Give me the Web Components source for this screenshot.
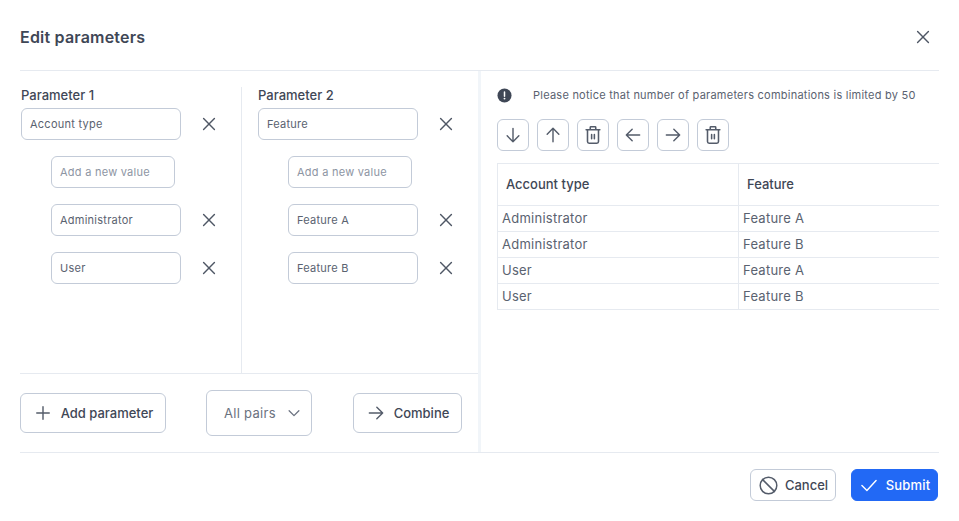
<!DOCTYPE html>
<html lang="en">
<head>
<meta charset="utf-8">
<title>Edit parameters</title>
<style>
  html, body { margin: 0; background: #fff; }
  body { font-family: Inter, "Noto Sans", sans-serif; color: #3f4756; }
</style>
</head>
<body>
<edit-dialog></edit-dialog>
<script>
// shared icons, all on a 24 box
const ICONS = {
  close: `<path d="M5.5 5.5l13 13M18.5 5.5l-13 13"/>`,
  plus: `<path d="M12 4.5v15M4.5 12h15"/>`,
  down: `<path d="M12 4v16M5 13l7 7 7-7"/>`,
  up: `<path d="M12 20V4M5 11l7-7 7 7"/>`,
  left: `<path d="M20 12H4M11 5l-7 7 7 7"/>`,
  right: `<path d="M4 12h16M13 5l7 7-7 7"/>`,
  chevron: `<path d="M5.5 9l6.5 6.5L18.5 9"/>`,
  trash: `<path d="M4.5 6.2h15M9 6.2V3.8c0-.4.3-.7.7-.7h4.6c.4 0 .7.3.7.7v2.4M6 6.2v13c0 1 .8 1.8 1.8 1.8h8.4c1 0 1.8-.8 1.8-1.8v-13M10.5 11.5v4.5M13.5 11.5v4.5"/>`,
  ban: `<circle cx="12" cy="12" r="9.5"/><path d="M5.3 5.3l13.4 13.4"/>`,
  check: `<path d="M3.5 12.5l6 6L20.5 6.5"/>`,
};

function icon(name, size) {
  return `<svg width="${size}" height="${size}" viewBox="0 0 24 24" fill="none" stroke="currentColor" stroke-width="1.7" stroke-linecap="round" stroke-linejoin="round" aria-hidden="true">${ICONS[name]}</svg>`;
}

class TextField extends HTMLElement {
  connectedCallback() {
    const hint = this.hasAttribute("placeholder");
    this.attachShadow({ mode: "open" }).innerHTML = `
      <style>
        :host {
          display: flex;
          align-items: center;
          box-sizing: border-box;
          width: ${this.getAttribute("width") || 130}px;
          height: 32px;
          padding: 0 8px;
          border: 1px solid #c3cbd8;
          border-radius: 6px;
          background: #fff;
          font-size: 11px;
          letter-spacing: 0.25px;
          color: ${hint ? "#8d95a3" : "#5a6270"};
        }
      </style>
      <slot></slot>
    `;
  }
}

class ActionButton extends HTMLElement {
  connectedCallback() {
    const name = this.getAttribute("icon");
    const size = this.getAttribute("size") || 20;
    this.attachShadow({ mode: "open" }).innerHTML = `
      <style>
        :host {
          display: inline-flex;
          align-items: center;
          justify-content: center;
          box-sizing: border-box;
          height: var(--h, 40px);
          gap: var(--gap, 8px);
          padding: var(--pad, 0);
          border: 1px solid var(--line, #c3cbd8);
          border-radius: 6px;
          background: var(--bg, #fff);
          color: var(--fg, #3f4756);
          font-size: 13px;
          font-weight: 550;
          white-space: nowrap;
        }
        svg { display: block; color: var(--icon, #545c6a); flex: none; }
      </style>
      ${icon(name, size)}<slot></slot>
    `;
  }
}

class ParamColumn extends HTMLElement {
  connectedCallback() {
    const values = this.getAttribute("values").split(",");
    const row = (field) => `
      <div class="row">${field}<span class="x">${icon("close", 20)}</span></div>`;
    this.attachShadow({ mode: "open" }).innerHTML = `
      <style>
        :host { display: block; box-sizing: border-box; }
        .label { font-size: 13px; font-weight: 550; line-height: 17px; margin-bottom: 4px; color: #3f4756; }
        .values { display: flex; flex-direction: column; gap: 16px; padding-left: 30px; margin-top: 16px; }
        .row { display: flex; align-items: center; }
        .x { display: flex; margin-left: 18px; color: #4f5765; }
      </style>
      <div class="label">${this.getAttribute("label")}</div>
      ${row(`<text-field width="160">${this.getAttribute("name")}</text-field>`)}
      <div class="values">
        <div class="row"><text-field width="124" placeholder>Add a new value</text-field></div>
        ${values.map((v) => row(`<text-field width="130">${v}</text-field>`)).join("")}
      </div>
    `;
  }
}

class CombosTable extends HTMLElement {
  connectedCallback() {
    const rows = [
      ["Administrator", "Feature A"],
      ["Administrator", "Feature B"],
      ["User", "Feature A"],
      ["User", "Feature B"],
    ];
    this.attachShadow({ mode: "open" }).innerHTML = `
      <style>
        :host { display: block; }
        .grid { display: grid; grid-template-columns: 241px 1fr; border-top: 1px solid #e6eaf0; border-left: 1px solid #e6eaf0; }
        .cell { box-sizing: border-box; border-bottom: 1px solid #e6eaf0; border-right: 1px solid #e6eaf0; display: flex; align-items: center; }
        .cell:nth-child(2n) { border-right: 0; }
        .head { height: 42px; padding: 0 0 2px 8px; font-size: 13px; font-weight: 550; color: #3f4756; }
        .body { height: 26px; padding: 0 0 2px 4px; font-size: 13px; letter-spacing: 0.25px; color: #5a6270; }
      </style>
      <div class="grid">
        <div class="cell head">Account type</div>
        <div class="cell head">Feature</div>
        ${rows.map((r) => r.map((c) => `<div class="cell body">${c}</div>`).join("")).join("")}
      </div>
    `;
  }
}

class EditDialog extends HTMLElement {
  connectedCallback() {
    const tools = ["down", "up", "trash", "left", "right", "trash"];
    this.attachShadow({ mode: "open" }).innerHTML = `
      <style>
        :host { display: block; width: 959px; height: 521px; box-sizing: border-box; padding: 0 20px; overflow: hidden; }
        header { height: 70px; box-sizing: border-box; padding-top: 4px; display: flex; align-items: center; justify-content: space-between; }
        h1 { margin: 0; font-size: 16px; font-weight: 600; letter-spacing: 0.2px; color: #3f4756; }
        .close { display: flex; color: #4f5765; margin-right: 6px; }
        .main { display: flex; height: 383px; border-top: 1px solid #e6eaf0; border-bottom: 1px solid #e6eaf0; box-sizing: border-box; width: 919px; }
        .left { width: 458px; display: flex; flex-direction: column; flex: none; }
        .params { flex: 1; display: grid; grid-template-columns: 222px 1fr; padding-top: 16px; }
        .params param-column:first-child { padding-left: 1px; border-right: 1px solid #e6eaf0; }
        .params param-column:last-child { padding-left: 16px; }
        .actions { height: 79px; box-sizing: border-box; border-top: 1px solid #e6eaf0; display: flex; align-items: center; }
        .add { width: 146px; }
        .select {
          display: flex; align-items: center; gap: 9px; box-sizing: border-box;
          width: 106px; height: 46px; margin-left: 40px; margin-right: 41px; padding-left: 17px;
          border: 1px solid #c3cbd8; border-radius: 6px; font-size: 13px; letter-spacing: 0.3px; color: #6b7280;
        }
        .select svg { display: block; }
        .combine { width: 109px; }
        .right { flex: 1; min-width: 0; border-left: 3px solid #f1f5f9; padding: 16px 0 0 16px; }
        .notice { display: flex; align-items: center; height: 16px; font-size: 11px; letter-spacing: 0.24px; color: #5a6270; }
        .notice svg { display: block; margin-right: 21px; flex: none; }
        .tools { display: flex; gap: 8px; margin: 16px 0 12px; --h: 32px; }
        .tools action-button { width: 32px; }
        footer { height: 68px; display: flex; align-items: center; justify-content: flex-end; padding-bottom: 4px; box-sizing: border-box; padding-right: 1px; }
        .cancel { width: 86px; --h: 32px; --gap: 6px; margin-right: 15px; }
        .submit { width: 87px; --h: 32px; --gap: 7px; --bg: #2269f5; --line: #2269f5; --fg: #fff; --icon: #fff; letter-spacing: 0.2px; }
      </style>
      <header>
        <h1>Edit parameters</h1>
        <span class="close">${icon("close", 20)}</span>
      </header>
      <div class="main">
        <div class="left">
          <div class="params">
            <param-column label="Parameter 1" name="Account type" values="Administrator,User"></param-column>
            <param-column label="Parameter 2" name="Feature" values="Feature A,Feature B"></param-column>
          </div>
          <div class="actions">
            <action-button class="add" icon="plus">Add parameter</action-button>
            <div class="select">All pairs ${icon("chevron", 18)}</div>
            <action-button class="combine" icon="right">Combine</action-button>
          </div>
        </div>
        <div class="right">
          <div class="notice">
            <svg width="15" height="15" viewBox="0 0 16 16" aria-hidden="true"><circle cx="8" cy="8" r="7.5" fill="#3f4756"/><path d="M8 4.2v4.6" stroke="#fff" stroke-width="1.6" stroke-linecap="round"/><circle cx="8" cy="11.3" r="1" fill="#fff"/></svg>
            Please notice that number of parameters combinations is limited by 50
          </div>
          <div class="tools">${tools.map((t) => `<action-button icon="${t}" size="${t === "trash" ? 22 : 20}"></action-button>`).join("")}</div>
          <combos-table></combos-table>
        </div>
      </div>
      <footer>
        <action-button class="cancel" icon="ban" size="21">Cancel</action-button>
        <action-button class="submit" icon="check">Submit</action-button>
      </footer>
    `;
  }
}

customElements.define("text-field", TextField);
customElements.define("action-button", ActionButton);
customElements.define("param-column", ParamColumn);
customElements.define("combos-table", CombosTable);
customElements.define("edit-dialog", EditDialog);
</script>
</body>
</html>
